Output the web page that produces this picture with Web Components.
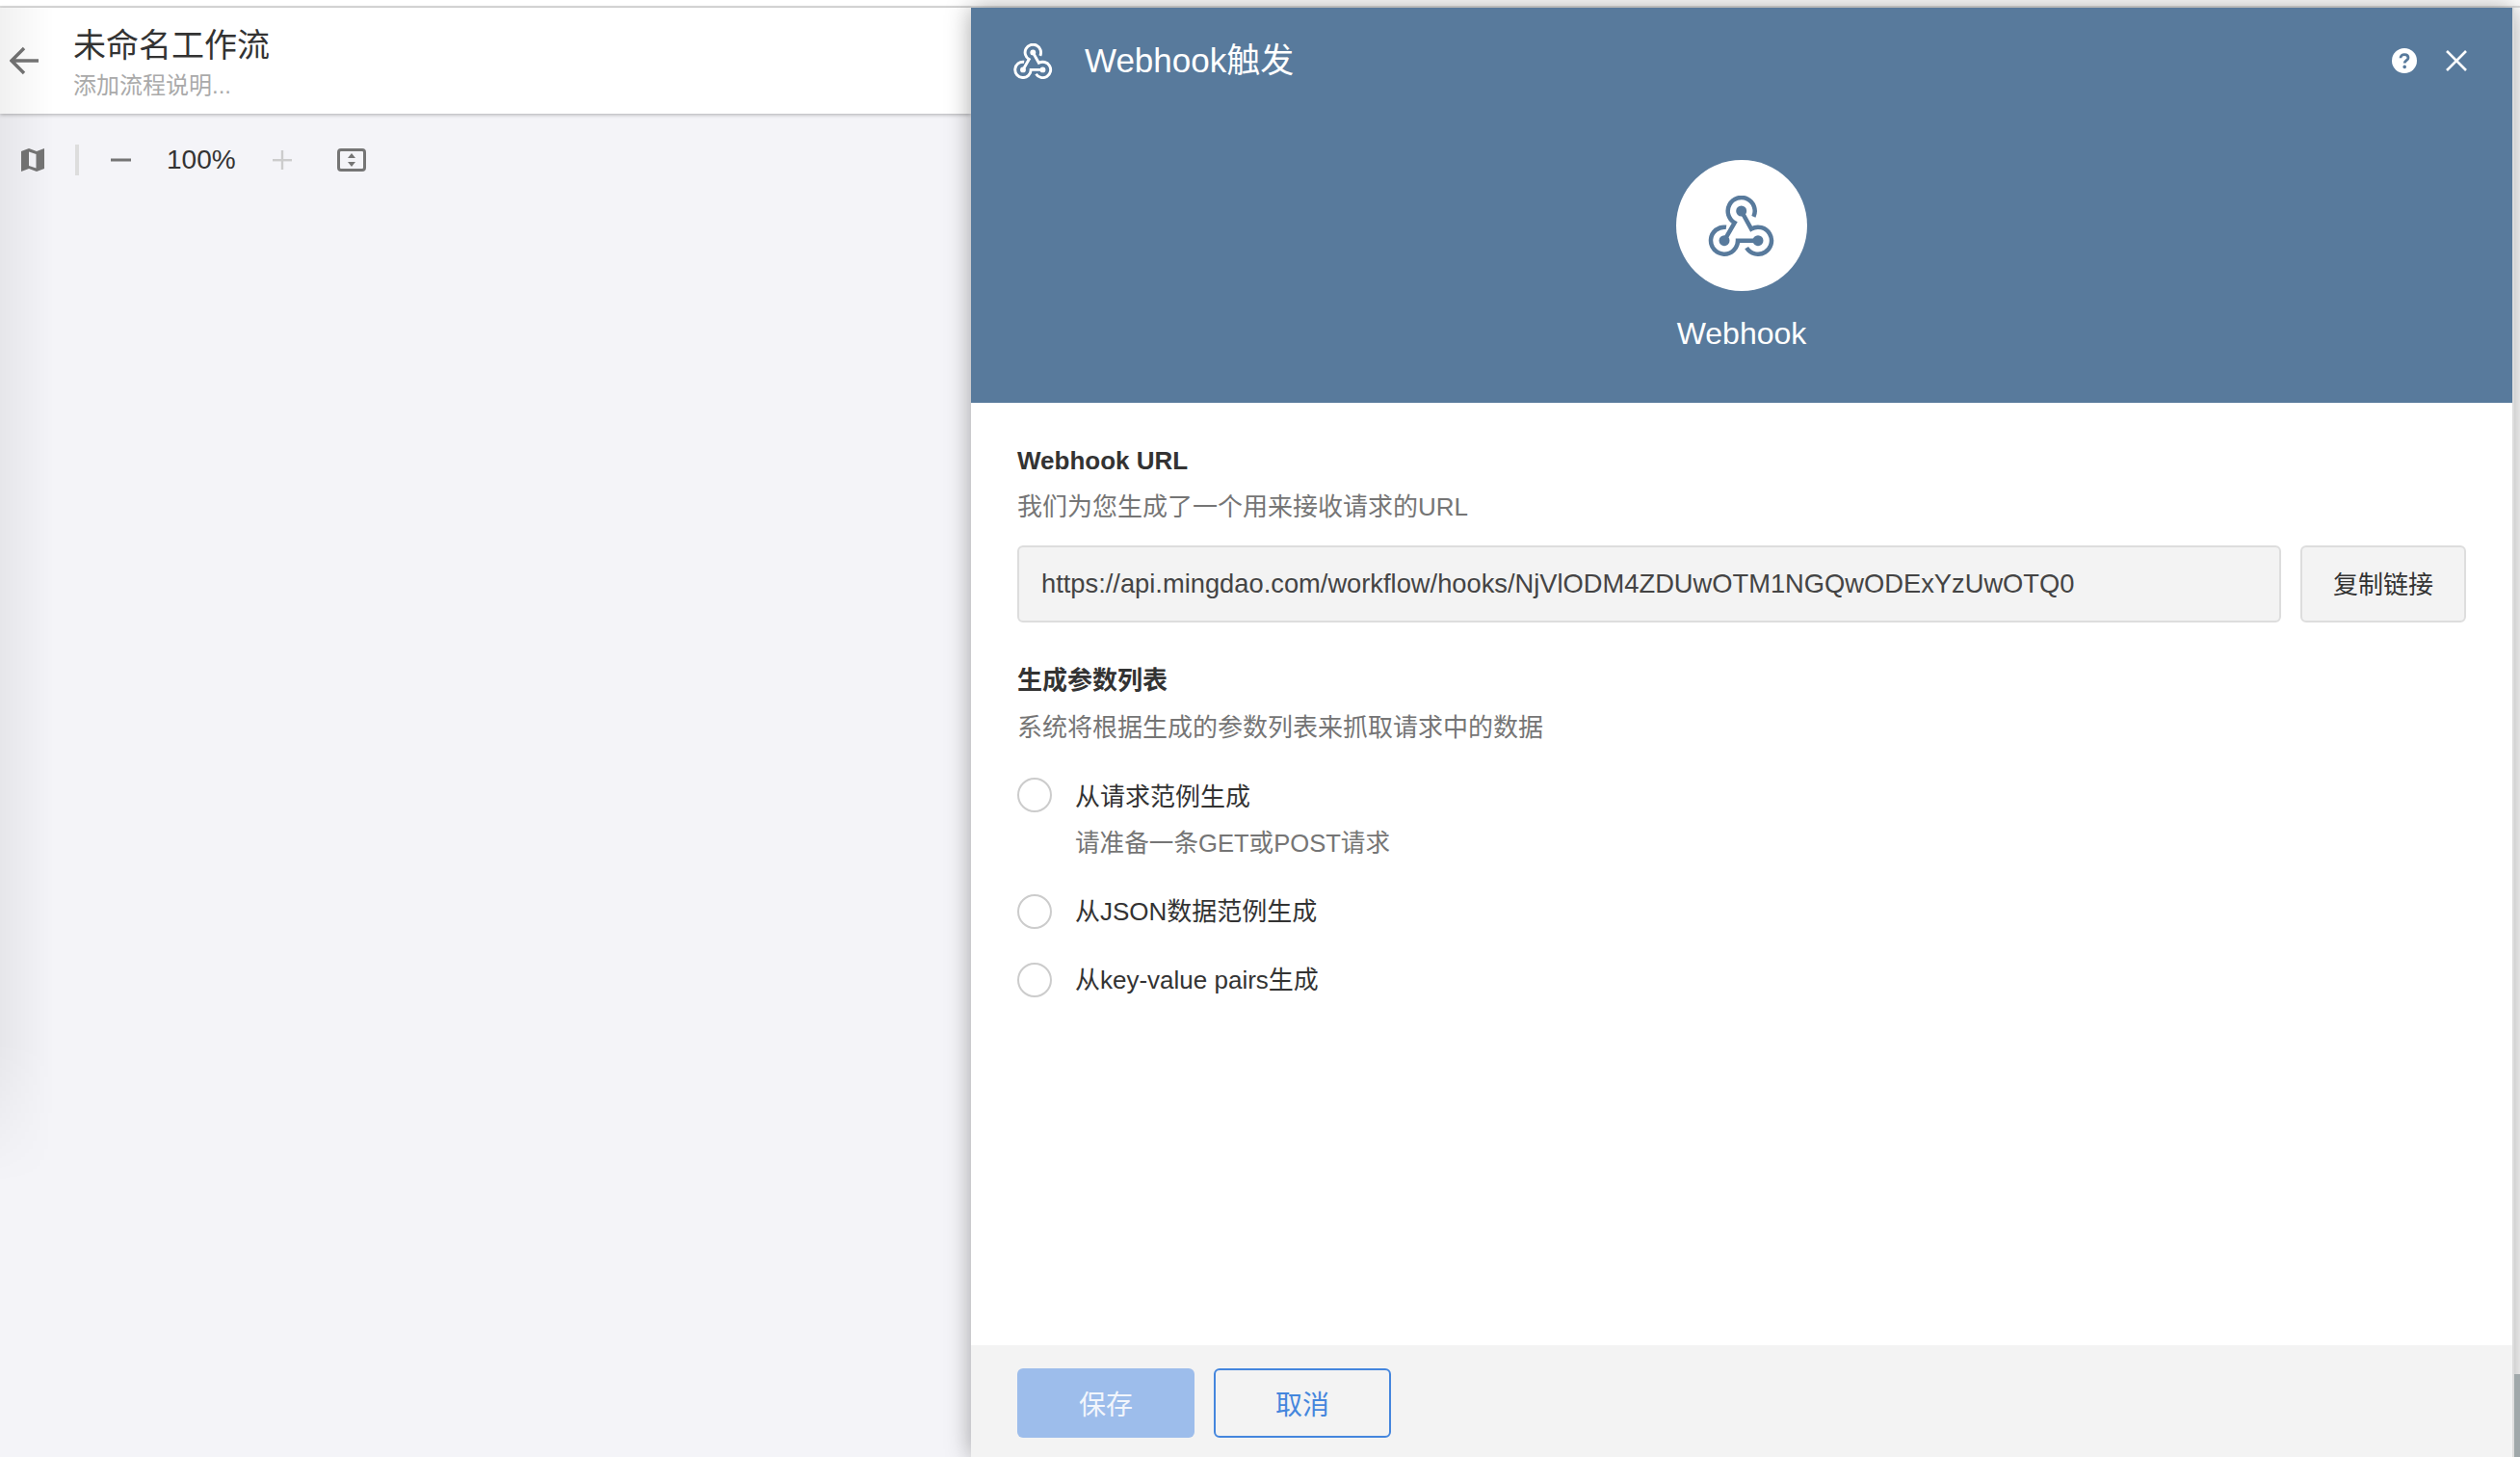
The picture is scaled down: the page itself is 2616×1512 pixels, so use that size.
<!DOCTYPE html>
<html lang="zh">
<head>
<meta charset="utf-8">
<title>Webhook触发</title>
<style>
    html, body { margin: 0; padding: 0; height: 100%; overflow: hidden; background: #fff; }
    body { font-family: "Liberation Sans", "Noto Sans CJK SC", sans-serif; }
</style>
</head>
<body>
<wf-app></wf-app>

<script>
const HOOK_PATHS = `
    <path d="M47.4 21.9A14 14 0 1 0 27.7 28.1L17 46.7"/>
    <path d="M34.7 16L45 34.6A14 14 0 1 1 40.1 54.1"/>
    <path d="M19 32.8A14 14 0 1 0 31 46.7L52 46.7"/>
`;

class HookIcon extends HTMLElement {
    connectedCallback() {
        const width = this.getAttribute('width') || 70;
        const height = Math.round(width * 0.9);
        const stroke = this.getAttribute('stroke') || 4.5;
        const dot = this.getAttribute('dot') || 5.5;
        this.attachShadow({ mode: 'open' }).innerHTML = `
            <style>
                :host { display: block; color: inherit; line-height: 0; }
            </style>
            <svg width="${width}" height="${height}" viewBox="0 0 70 63" fill="none" stroke="currentColor"
                stroke-width="${stroke}">
                ${HOOK_PATHS}
                <g fill="currentColor" stroke="none">
                    <circle cx="34.7" cy="16" r="${dot}"/>
                    <circle cx="17" cy="46.7" r="${dot}"/>
                    <circle cx="52" cy="46.7" r="${dot}"/>
                </g>
            </svg>
        `;
    }
}

class WfTopbar extends HTMLElement {
    constructor() {
        super();
        this.attachShadow({ mode: 'open' }).innerHTML = `
            <style>
                :host {
                    display: flex;
                    align-items: flex-start;
                    height: 110px;
                    background: #fff;
                    box-shadow: 0 1px 4px rgba(0, 0, 0, .3);
                    position: relative;
                    color: #333;
                }
                .back { margin: 40px 0 0 10px; width: 30px; height: 30px; }
                .text { margin-left: 36px; padding-top: 18px; }
                .name { font-size: 34px; line-height: 42px; color: #333; }
                .desc { font-size: 24px; line-height: 36px; color: #aaa; margin-top: 3px; }
            </style>
            <svg class="back" viewBox="0 0 30 30" fill="none" stroke="#757575" stroke-width="3.4">
                <path d="M30 15H3M15 2L2 15L15 28"/>
            </svg>
            <div class="text">
                <div class="name">未命名工作流</div>
                <div class="desc">添加流程说明...</div>
            </div>
        `;
    }
}

class WfZoomTools extends HTMLElement {
    constructor() {
        super();
        this.attachShadow({ mode: 'open' }).innerHTML = `
            <style>
                :host {
                    display: flex;
                    align-items: center;
                    height: 36px;
                    padding: 30px 0 0 22px;
                }
                svg { display: block; flex: none; }
                .divider { width: 4px; height: 32px; background: #ddd; margin: 0 33px 0 32px; }
                .pct { font-size: 28px; line-height: 36px; color: #333; margin: 0 38px 0 37px; }
                .fit { margin-left: 47px; }
            </style>
            <svg width="24" height="24" viewBox="0 0 24 24">
                <path fill="#757575" d="M0 3L8 0L16 3L24 0V21L16 24L8 21L0 24Z"/>
                <path fill="#f4f4f8" d="M8 3.5L15.5 6V20.5L8 18Z"/>
            </svg>
            <div class="divider"></div>
            <svg width="21" height="4" viewBox="0 0 21 4"><rect width="21" height="3" y="0.5" fill="#757575"/></svg>
            <span class="pct">100%</span>
            <svg width="20" height="20" viewBox="0 0 20 20" fill="#ccc">
                <rect x="0" y="9" width="20" height="2.4"/><rect x="8.8" y="0" width="2.4" height="20"/>
            </svg>
            <svg class="fit" width="30" height="24" viewBox="0 0 30 24">
                <rect x="1.5" y="1.5" width="27" height="21" rx="2.5" fill="none" stroke="#757575" stroke-width="3"/>
                <path d="M15 5L19 10H11ZM15 19L11 14H19Z" fill="#757575"/>
            </svg>
        `;
    }
}

class WfRadio extends HTMLElement {
    constructor() {
        super();
        this.attachShadow({ mode: 'open' }).innerHTML = `
            <style>
                :host {
                    display: grid;
                    grid-template-columns: 36px 1fr;
                    column-gap: 25px;
                    font-size: 26px;
                    line-height: 40px;
                    color: #333;
                }
                .dot {
                    box-sizing: border-box;
                    width: 36px;
                    height: 36px;
                    border: 2px solid #ccc;
                    border-radius: 50%;
                    margin-top: 2px;
                    background: #fff;
                }
                .label { margin-left: -1px; }
                :host([hint]) .label { padding-top: 2px; height: 38px; }
                .hint { grid-column: 2; color: #757575; margin: 10px 0 0 -1px; font-size: 25.6px; }
                .hint:empty { display: none; }
            </style>
            <div class="dot"></div>
            <div class="label"><slot></slot></div>
            <div class="hint"></div>
        `;
    }

    connectedCallback() {
        this.shadowRoot.querySelector('.hint').textContent = this.getAttribute('hint') || '';
    }
}

class WfButton extends HTMLElement {
    constructor() {
        super();
        this.attachShadow({ mode: 'open' }).innerHTML = `
            <style>
                :host {
                    box-sizing: border-box;
                    display: flex;
                    align-items: center;
                    justify-content: center;
                    width: 184px;
                    height: 72px;
                    border-radius: 6px;
                    font-size: 28px;
                    background: #9dbdeb;
                    color: #f2f6fc;
                }
                :host([outline]) {
                    background: transparent;
                    border: 2px solid #4486dd;
                    color: #4486dd;
                }
            </style>
            <slot></slot>
        `;
    }
}

class WfPanelHead extends HTMLElement {
    constructor() {
        super();
        this.attachShadow({ mode: 'open' }).innerHTML = `
            <style>
                :host {
                    display: block;
                    height: 410px;
                    background: #587a9c;
                    color: #fff;
                }
                .bar { display: flex; align-items: center; height: 110px; padding: 0 47px 0 44px; }
                .title { flex: 1; margin-left: 33px; font-size: 35px; line-height: 40px; }
                .help { margin-right: 30px; }
                .hero { display: flex; flex-direction: column; align-items: center; margin-top: 48px; }
                .round {
                    display: flex;
                    align-items: center;
                    justify-content: center;
                    width: 136px;
                    height: 136px;
                    border-radius: 50%;
                    background: #fff;
                    color: #587a9c;
                }
                .label { font-size: 32px; line-height: 40px; margin-top: 24px; }
            </style>
            <div class="bar">
                <hook-icon width="41" stroke="5" dot="5"></hook-icon>
                <div class="title">Webhook触发</div>
                <svg class="help" width="26" height="26" viewBox="0 0 26 26">
                    <circle cx="13" cy="13" r="13" fill="#fff"/>
                    <path d="M9 10.2C9 7.8 10.8 6.6 13 6.6C15.3 6.6 17 7.9 17 9.9C17 12.6 13.2 12.8 13.2 15.6"
                        fill="none" stroke="#587a9c" stroke-width="2.8"/>
                    <circle cx="13.2" cy="19.4" r="1.8" fill="#587a9c"/>
                </svg>
                <svg width="22" height="22" viewBox="0 0 22 22" stroke="#fff" stroke-width="2.6">
                    <path d="M1 1L21 21M21 1L1 21"/>
                </svg>
            </div>
            <div class="hero">
                <div class="round"><hook-icon width="70"></hook-icon></div>
                <div class="label">Webhook</div>
            </div>
        `;
    }
}

class WfPanelBody extends HTMLElement {
    constructor() {
        super();
        this.attachShadow({ mode: 'open' }).innerHTML = `
            <style>
                :host {
                    display: block;
                    flex: 1;
                    padding: 40px 48px 0;
                    font-size: 26px;
                    line-height: 40px;
                    color: #333;
                }
                .head { font-weight: bold; }
                .sub { color: #757575; }
                .first { margin-top: 8px; }
                .urlrow { display: flex; gap: 20px; margin-top: 20px; }
                .url, .copy {
                    box-sizing: border-box;
                    display: flex;
                    align-items: center;
                    height: 80px;
                    background: #f3f3f3;
                    border: 2px solid #ddd;
                    border-radius: 6px;
                }
                .url { flex: 1; padding-left: 23px; font-size: 27.3px; color: #444; }
                .copy { width: 172px; justify-content: center; padding-top: 2px; }
                .second { margin-top: 40px; }
                .second-sub { margin-top: 9px; }
                .options { display: flex; flex-direction: column; gap: 31px; margin-top: 30px; }
            </style>
            <div class="head">Webhook URL</div>
            <div class="sub first">我们为您生成了一个用来接收请求的URL</div>
            <div class="urlrow">
                <div class="url">https://api.mingdao.com/workflow/hooks/NjVlODM4ZDUwOTM1NGQwODExYzUwOTQ0</div>
                <div class="copy">复制链接</div>
            </div>
            <div class="head second">生成参数列表</div>
            <div class="sub second-sub">系统将根据生成的参数列表来抓取请求中的数据</div>
            <div class="options">
                <wf-radio hint="请准备一条GET或POST请求">从请求范例生成</wf-radio>
                <wf-radio>从JSON数据范例生成</wf-radio>
                <wf-radio>从key-value pairs生成</wf-radio>
            </div>
        `;
    }
}

class WfPanel extends HTMLElement {
    constructor() {
        super();
        this.attachShadow({ mode: 'open' }).innerHTML = `
            <style>
                :host {
                    display: flex;
                    flex-direction: column;
                    width: 1602px;
                    box-sizing: border-box;
                    background: #fff;
                    border-right: 2px solid #ddd;
                    box-shadow: 0 0 24px rgba(0, 0, 0, .35);
                    position: relative;
                }
                .foot {
                    display: flex;
                    gap: 20px;
                    height: 116px;
                    box-sizing: border-box;
                    padding: 24px 48px 0;
                    background: #f3f3f3;
                }
            </style>
            <wf-panel-head></wf-panel-head>
            <wf-panel-body></wf-panel-body>
            <div class="foot">
                <wf-button>保存</wf-button>
                <wf-button outline>取消</wf-button>
            </div>
        `;
    }
}

class WfApp extends HTMLElement {
    constructor() {
        super();
        this.attachShadow({ mode: 'open' }).innerHTML = `
            <style>
                :host {
                    display: flex;
                    flex-direction: column;
                    height: 1512px;
                    background: #fff;
                    position: relative;
                    overflow: hidden;
                }
                .strip { height: 6px; flex: none; border-bottom: 2px solid #ddd; }
                .main { flex: 1; display: flex; min-height: 0; }
                .work { width: 1008px; flex: none; background: #f4f4f8; position: relative; }
                .fade {
                    position: absolute;
                    left: 0;
                    top: 0;
                    height: 1220px;
                    width: 56px;
                    background: linear-gradient(90deg, rgba(0, 0, 0, .055), rgba(0, 0, 0, 0));
                    -webkit-mask-image: linear-gradient(180deg, #000 88%, transparent);
                    mask-image: linear-gradient(180deg, #000 88%, transparent);
                }
                .gutter { flex: 1; position: relative; }
                .thumb {
                    position: absolute;
                    left: 0;
                    right: 0;
                    bottom: 0;
                    height: 86px;
                    background: #a0a8aa;
                }
            </style>
            <div class="strip"></div>
            <div class="main">
                <div class="work">
                    <wf-topbar></wf-topbar>
                    <wf-zoom-tools></wf-zoom-tools>
                    <div class="fade"></div>
                </div>
                <wf-panel></wf-panel>
                <div class="gutter"><div class="thumb"></div></div>
            </div>
        `;
    }
}

// children first, so nested elements are ready when the app renders
customElements.define('hook-icon', HookIcon);
customElements.define('wf-topbar', WfTopbar);
customElements.define('wf-zoom-tools', WfZoomTools);
customElements.define('wf-radio', WfRadio);
customElements.define('wf-button', WfButton);
customElements.define('wf-panel-head', WfPanelHead);
customElements.define('wf-panel-body', WfPanelBody);
customElements.define('wf-panel', WfPanel);
customElements.define('wf-app', WfApp);
</script>
</body>
</html>
